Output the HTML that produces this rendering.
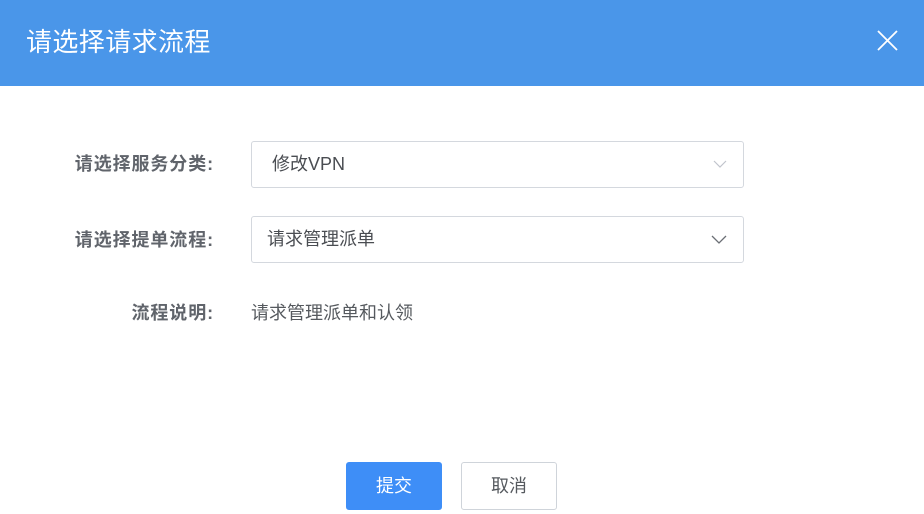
<!DOCTYPE html>
<html><head><meta charset="utf-8"><style>
*{margin:0;padding:0;box-sizing:border-box}
body{width:924px;height:514px;background:#fff;font-family:"Liberation Sans","Noto Sans CJK SC",sans-serif;position:relative;overflow:hidden}
.hd{position:absolute;left:0;top:0;width:924px;height:86px;background:#4a96e9}
.title{position:absolute;left:26px;top:25px;font-size:26px;line-height:34px;color:#fff;letter-spacing:0.4px}
.lbl{position:absolute;right:710px;font-size:18px;font-weight:bold;color:#60646b;white-space:nowrap;line-height:24px;letter-spacing:0.9px}
.sel{position:absolute;left:251px;width:493px;height:47px;border:1px solid #d4d8de;border-radius:3px;font-size:18px;color:#4a4d52;line-height:45px}
.sel svg{position:absolute;right:16px;top:18px}
.btn{position:absolute;top:462px;width:96px;height:48px;border-radius:3px;font-size:18px;line-height:48px;text-align:center}
</style></head><body>
<div class="hd"><div class="title">请选择请求流程</div>
<svg style="position:absolute;left:877px;top:30px" width="21" height="21"><path d="M1 1L20 20M20 1L1 20" stroke="#fff" stroke-width="1.8"/></svg></div>
<div class="lbl" style="top:152px">请选择服务分类:</div>
<div class="sel" style="top:141px"><span style="margin-left:20px">修改VPN</span><svg width="14" height="9"><path d="M1 1L7 7L13 1" fill="none" stroke="#c0c4cc" stroke-width="1.2"/></svg></div>
<div class="lbl" style="top:228px">请选择提单流程:</div>
<div class="sel" style="top:216px"><span style="margin-left:15px">请求管理派单</span><svg width="16" height="10"><path d="M1 1L8 8L15 1" fill="none" stroke="#6b6f75" stroke-width="1.3"/></svg></div>
<div class="lbl" style="top:301px">流程说明:</div>
<div style="position:absolute;left:251px;top:301px;font-size:18px;line-height:24px;color:#55595e">请求管理派单和认领</div>
<div class="btn" style="left:346px;background:#3e8ef7;color:#fff">提交</div>
<div class="btn" style="left:461px;border:1px solid #cfd4da;color:#55595e;line-height:46px">取消</div>
</body></html>
